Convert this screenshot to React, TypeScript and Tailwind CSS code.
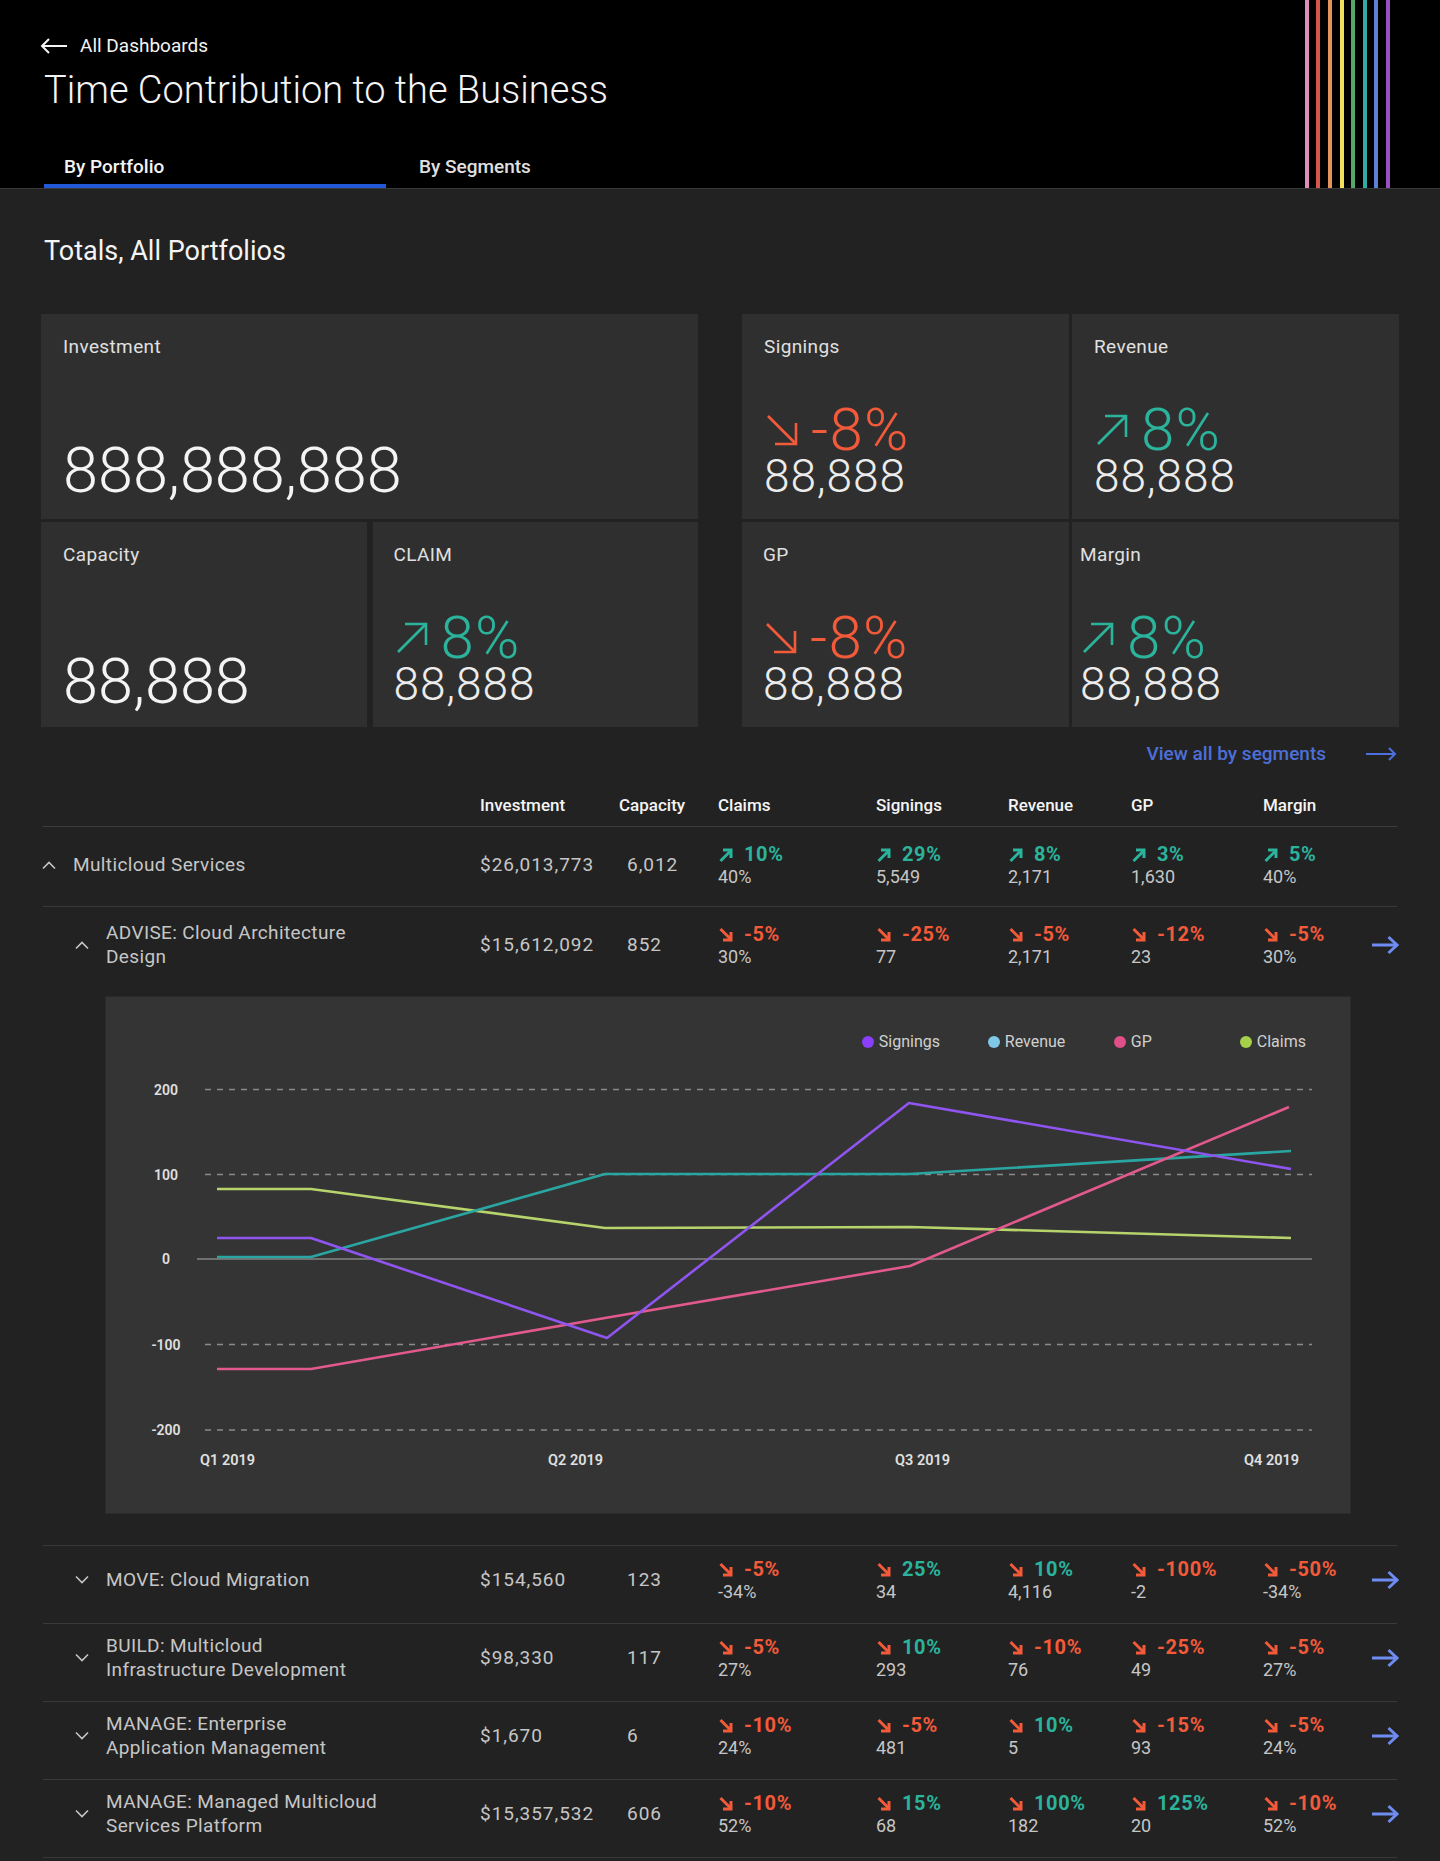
import React from "react";

const RAINBOW = [
  "bg-[#e08cbd]",
  "bg-[#d6564c]",
  "bg-[#e3935c]",
  "bg-[#f3e05a]",
  "bg-[#55a86a]",
  "bg-[#2fada3]",
  "bg-[#5b80d6]",
  "bg-[#9a4fc7]",
];

function BackArrow() {
  return (
    <svg width="28" height="16" viewBox="0 0 28 16" fill="none" stroke="#f4f4f4" strokeWidth="2">
      <path d="M27 8 H2" />
      <path d="M9 1 L2 8 L9 15" />
    </svg>
  );
}

function BigArrow({ up }: { up: boolean }) {
  return (
    <svg width="36" height="36" viewBox="0 0 36 36" fill="none" stroke="currentColor" strokeWidth="2.6">
      {up ? (
        <>
          <path d="M4 32 L32 4" />
          <path d="M11 4 H32 V25" />
        </>
      ) : (
        <>
          <path d="M4 4 L32 32" />
          <path d="M11 32 H32 V11" />
        </>
      )}
    </svg>
  );
}

function SmallArrow({ up }: { up: boolean }) {
  return (
    <svg width="16" height="16" viewBox="0 0 16 16" fill="none" stroke="currentColor" strokeWidth="3">
      {up ? (
        <>
          <path d="M2.5 14 L13 3.5" />
          <path d="M5 3 H13 V11" />
        </>
      ) : (
        <>
          <path d="M2.5 2 L13 12.5" />
          <path d="M5 13 H13 V5" />
        </>
      )}
    </svg>
  );
}

function Chevron({ up }: { up: boolean }) {
  return (
    <svg width="16" height="10" viewBox="0 0 16 10" fill="none" stroke="#c6c6c6" strokeWidth="1.6">
      {up ? <polyline points="2,8.5 8,2.5 14,8.5" /> : <polyline points="2,1.5 8,7.5 14,1.5" />}
    </svg>
  );
}

function RowArrow() {
  return (
    <svg width="30" height="20" viewBox="0 0 30 20" fill="none" stroke="#6f8cf2" strokeWidth="3">
      <path d="M2 10 H27" />
      <path d="M18.5 2 L27 10 L18.5 18" />
    </svg>
  );
}

function LinkArrow() {
  return (
    <svg width="32" height="14" viewBox="0 0 32 14" fill="none" stroke="#4d6fe0" strokeWidth="2">
      <path d="M1 7 H30" />
      <path d="M24 1 L30 7 L24 13" />
    </svg>
  );
}

function Header() {
  return (
    <header className="flex h-[189px] justify-between border-b border-[#393939] bg-black">
      <div className="flex flex-col pl-[40px] pt-[34px]">
        <div className="flex h-[24px] items-center gap-[12px] text-[19px] leading-[24px] text-[#f4f4f4]">
          <BackArrow />
          <span>All Dashboards</span>
        </div>
        <h1 className="ml-[4px] mt-[10px] text-[38px] font-light leading-[44px] text-[#f4f4f4]">
          Time Contribution to the Business
        </h1>
        <div className="mt-auto flex">
          <div className="ml-[4px] w-[342px] border-b-4 border-[#2159d6] pb-[5px] pl-[20px] text-[19px] font-medium leading-[24px] text-[#f4f4f4]">
            By Portfolio
          </div>
          <div className="pb-[9px] pl-[33px] text-[19px] font-medium leading-[24px] text-[#e0e0e0]">
            By Segments
          </div>
        </div>
      </div>
      <div className="mr-[50px] flex gap-[7.6px]">
        {RAINBOW.map((c) => (
          <div key={c} className={`h-full w-[4px] ${c}`} />
        ))}
      </div>
    </header>
  );
}

function NumberCard({ label, value, pb }: { label: string; value: string; pb: string }) {
  return (
    <div className={`flex h-[205px] flex-col justify-between bg-[#2f2f2f] pl-[22px] pt-[21px] ${pb}`}>
      <div className="text-[19px] leading-[24px] tracking-[0.02em] text-[#e0e0e0]">{label}</div>
      <div className="text-[63px] font-light leading-[60px] text-[#f4f4f4]">{value}</div>
    </div>
  );
}

function PctCard({
  label,
  up,
  pct,
  value,
  pl,
}: {
  label: string;
  up: boolean;
  pct: string;
  value: string;
  pl: string;
}) {
  return (
    <div className={`flex h-[205px] flex-col justify-between bg-[#2f2f2f] pb-[22px] pt-[21px] ${pl}`}>
      <div className="text-[19px] leading-[24px] tracking-[0.02em] text-[#e0e0e0]">{label}</div>
      <div>
        <div
          className={`flex h-[50px] items-center gap-[11px] ${up ? "text-[#2bb39c]" : "text-[#f25a3a]"}`}
        >
          <BigArrow up={up} />
          <span className="text-[60px] font-light leading-[50px] tracking-[0.02em]">{pct}</span>
        </div>
        <div className="text-[46px] font-light leading-[42px] tracking-[0.02em] text-[#ececec]">{value}</div>
      </div>
    </div>
  );
}

type Metric = { up: boolean; pct: string; sub: string };

type Row = {
  level: 1 | 2;
  open: boolean;
  name: string[];
  inv: string;
  cap: string;
  metrics: Metric[];
  arrow: boolean;
};

const m = (up: boolean, pct: string, sub: string): Metric => ({ up, pct, sub });

const ROWS: Row[] = [
  {
    level: 1,
    open: true,
    name: ["Multicloud Services"],
    inv: "$26,013,773",
    cap: "6,012",
    metrics: [m(true, "10%", "40%"), m(true, "29%", "5,549"), m(true, "8%", "2,171"), m(true, "3%", "1,630"), m(true, "5%", "40%")],
    arrow: false,
  },
  {
    level: 2,
    open: true,
    name: ["ADVISE: Cloud Architecture", "Design"],
    inv: "$15,612,092",
    cap: "852",
    metrics: [m(false, "-5%", "30%"), m(false, "-25%", "77"), m(false, "-5%", "2,171"), m(false, "-12%", "23"), m(false, "-5%", "30%")],
    arrow: true,
  },
  {
    level: 2,
    open: false,
    name: ["MOVE: Cloud Migration"],
    inv: "$154,560",
    cap: "123",
    metrics: [m(false, "-5%", "-34%"), m(false, "25%", "34"), m(false, "10%", "4,116"), m(false, "-100%", "-2"), m(false, "-50%", "-34%")],
    arrow: true,
  },
  {
    level: 2,
    open: false,
    name: ["BUILD: Multicloud", "Infrastructure Development"],
    inv: "$98,330",
    cap: "117",
    metrics: [m(false, "-5%", "27%"), m(false, "10%", "293"), m(false, "-10%", "76"), m(false, "-25%", "49"), m(false, "-5%", "27%")],
    arrow: true,
  },
  {
    level: 2,
    open: false,
    name: ["MANAGE: Enterprise", "Application Management"],
    inv: "$1,670",
    cap: "6",
    metrics: [m(false, "-10%", "24%"), m(false, "-5%", "481"), m(false, "10%", "5"), m(false, "-15%", "93"), m(false, "-5%", "24%")],
    arrow: true,
  },
  {
    level: 2,
    open: false,
    name: ["MANAGE: Managed Multicloud", "Services Platform"],
    inv: "$15,357,532",
    cap: "606",
    metrics: [m(false, "-10%", "52%"), m(false, "15%", "68"), m(false, "100%", "182"), m(false, "125%", "20"), m(false, "-10%", "52%")],
    arrow: true,
  },
];

const GRID = "grid grid-cols-[437px_147px_91px_158px_132px_123px_132px_107px_1fr]";

function MetricCell({ metric }: { metric: Metric }) {
  const neg = metric.pct.startsWith("-");
  return (
    <div className="flex flex-col">
      <div className="flex h-[23px] items-center gap-[10px]">
        <span className={metric.up ? "text-[#2bb39c]" : "text-[#f25a3a]"}>
          <SmallArrow up={metric.up} />
        </span>
        <span
          className={`text-[20px] font-bold leading-[23px] tracking-[0.03em] ${neg ? "text-[#f25a3a]" : "text-[#2bb39c]"}`}
        >
          {metric.pct}
        </span>
      </div>
      <div className="h-[22px] text-[18px] leading-[22px] text-[#c6c6c6]">{metric.sub}</div>
    </div>
  );
}

function RowCells({ row }: { row: Row }) {
  return (
    <div className={GRID}>
      <div className={`flex h-[44px] items-center gap-[16px] ${row.level === 1 ? "-ml-[2px]" : "pl-[31px]"}`}>
        <Chevron up={row.open} />
        <div className="text-[19px] leading-[24px] tracking-[0.02em] text-[#c6c6c6]">
          {row.name.map((l) => (
            <div key={l}>{l}</div>
          ))}
        </div>
      </div>
      <div className="flex h-[44px] items-center text-[19px] tracking-[0.05em] text-[#c6c6c6]">{row.inv}</div>
      <div className="flex h-[44px] items-center text-[19px] tracking-[0.05em] text-[#c6c6c6]">{row.cap}</div>
      {row.metrics.map((mt, i) => (
        <MetricCell key={i} metric={mt} />
      ))}
      <div className="flex h-[44px] items-center">{row.arrow ? <RowArrow /> : null}</div>
    </div>
  );
}

type Pt = [number, number];
const SERIES: { color: string; pts: Pt[] }[] = [
  { color: "#b6d36c", pts: [[112, 193], [206, 193], [500, 232], [805, 231], [1186, 242]] },
  { color: "#2aa6a2", pts: [[112, 261], [206, 261], [500, 178], [805, 178], [1186, 155]] },
  { color: "#e2598d", pts: [[112, 373], [206, 373], [500, 322], [805, 270], [1184, 111]] },
  { color: "#8f55f0", pts: [[112, 242], [206, 242], [502, 342], [804, 107], [1186, 173]] },
];

const LEGEND = [
  { label: "Signings", dot: "bg-[#8a3ffc]", w: "w-[126px]" },
  { label: "Revenue", dot: "bg-[#7fc8e8]", w: "w-[126px]" },
  { label: "GP", dot: "bg-[#e04f88]", w: "w-[126px]" },
  { label: "Claims", dot: "bg-[#a6cf4a]", w: "" },
];

function Chart() {
  const grid = [
    { y: 93.5, label: "200" },
    { y: 178.5, label: "100" },
    { y: 348.5, label: "-100" },
    { y: 434, label: "-200" },
  ];
  const xl = [
    { x: 95, label: "Q1 2019" },
    { x: 443, label: "Q2 2019" },
    { x: 790, label: "Q3 2019" },
    { x: 1139, label: "Q4 2019" },
  ];
  return (
    <div className="ml-[62px] mr-[46px] mt-[28px] h-[518px] border border-[#2a2a2a] bg-[#343434]">
      <div className="flex h-[55px] items-end justify-end pr-[44px]">
        {LEGEND.map((l) => (
          <div key={l.label} className={`flex h-[21px] items-center gap-[5px] ${l.w}`}>
            <span className={`h-[12px] w-[12px] rounded-full ${l.dot}`} />
            <span className="text-[16px] leading-[21px] text-[#d0d0d0]">{l.label}</span>
          </div>
        ))}
      </div>
      <svg width="1244" height="461" viewBox="1 56 1244 461" className="block">
        {grid.map((g) => (
          <line key={g.label} x1="100" x2="1207" y1={g.y} y2={g.y} stroke="#8a8a8a" strokeWidth="1.5" strokeDasharray="6 6" />
        ))}
        <line x1="92" x2="1207" y1="263" y2="263" stroke="#707070" strokeWidth="2" />
        {[...grid, { y: 263, label: "0" }].map((g) => (
          <text
            key={"t" + g.label}
            x="61"
            y={g.y + 5}
            textAnchor="middle"
            fontSize="14"
            fontWeight="600"
            fill="#e0e0e0"
            fontFamily="Roboto, sans-serif"
          >
            {g.label}
          </text>
        ))}
        {xl.map((x) => (
          <text key={x.label} x={x.x} y="469" fontSize="14.5" fontWeight="600" fill="#e0e0e0" fontFamily="Roboto, sans-serif">
            {x.label}
          </text>
        ))}
        {SERIES.map((s) => (
          <polyline
            key={s.color}
            points={s.pts.map((p) => p.join(",")).join(" ")}
            fill="none"
            stroke={s.color}
            strokeWidth="2.6"
            strokeLinejoin="round"
          />
        ))}
      </svg>
    </div>
  );
}

export default function App() {
  const [r1, r2, ...rest] = ROWS;
  return (
    <div className="min-h-[1861px] bg-[#222222] font-['Roboto','Liberation_Sans',sans-serif] text-[#f4f4f4]">
      <Header />
      <main className="px-[41px]">
        <h2 className="ml-[3px] pt-[46px] text-[27px] font-normal leading-[32px] text-[#f4f4f4]">
          Totals, All Portfolios
        </h2>
        <div className="mt-[47px] grid grid-cols-2 gap-[44px]">
          <div className="flex flex-col gap-[3px]">
            <NumberCard label="Investment" value="888,888,888" pb="pb-[18px]" />
            <div className="grid grid-cols-2 gap-[6px]">
              <NumberCard label="Capacity" value="88,888" pb="pb-[15px]" />
              <PctCard label="CLAIM" up pct="8%" value="88,888" pl="pl-[21px]" />
            </div>
          </div>
          <div className="grid grid-cols-2 gap-[3px]">
            <PctCard label="Signings" up={false} pct="-8%" value="88,888" pl="pl-[22px]" />
            <PctCard label="Revenue" up pct="8%" value="88,888" pl="pl-[22px]" />
            <PctCard label="GP" up={false} pct="-8%" value="88,888" pl="pl-[21px]" />
            <PctCard label="Margin" up pct="8%" value="88,888" pl="pl-[8px]" />
          </div>
        </div>

        <div className="mr-[2px] mt-[15px] flex h-[24px] items-center justify-end gap-[39px]">
          <span className="text-[19px] font-medium leading-[24px] text-[#4d6fd9]">View all by segments</span>
          <LinkArrow />
        </div>

        <div className="mx-[2px]">
          <div
            className={`${GRID} border-b border-[#3d3d3d] pb-[11px] pt-[29px] text-[17px] font-medium leading-[20px] text-[#f4f4f4]`}
          >
            <div />
            <div>Investment</div>
            <div className="-ml-[8px]">Capacity</div>
            <div>Claims</div>
            <div>Signings</div>
            <div>Revenue</div>
            <div>GP</div>
            <div>Margin</div>
            <div />
          </div>

          <div className="h-[80px] border-b border-[#393939] pt-[16px]">
            <RowCells row={r1} />
          </div>

          <div className="border-b border-[#393939] pb-[31px] pt-[16px]">
            <RowCells row={r2} />
            <Chart />
          </div>

          {rest.map((row) => (
            <div key={row.name.join(" ")} className="h-[78px] border-b border-[#393939] pt-[12px]">
              <RowCells row={row} />
            </div>
          ))}
        </div>
      </main>
    </div>
  );
}
